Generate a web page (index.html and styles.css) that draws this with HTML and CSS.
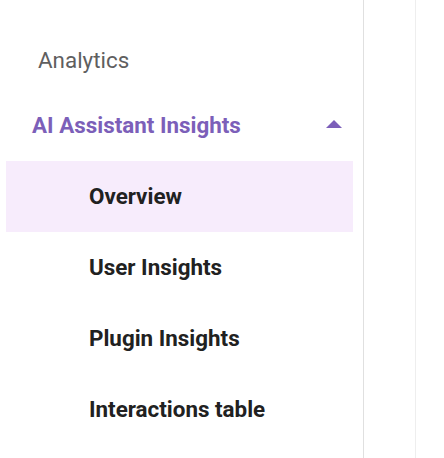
FILE: index.html
```html
<!DOCTYPE html>
<html lang="en">
<head>
<meta charset="utf-8">
<title>Sidebar</title>
<link rel="stylesheet" href="styles.css">
</head>
<body>
<div class="layout">
  <nav class="sidebar">
    <div class="nav-item top">Analytics</div>
    <div class="nav-group">
      <div class="group-head">
        <span class="group-title">AI Assistant Insights</span>
        <span class="caret"></span>
      </div>
      <div class="sub-item active">Overview</div>
      <div class="sub-item">User Insights</div>
      <div class="sub-item">Plugin Insights</div>
      <div class="sub-item">Interactions table</div>
    </div>
  </nav>
  <div class="gutter"></div>
  <main class="content"></main>
</div>
</body>
</html>
```
FILE: styles.css
```css
html, body {
  margin: 0;
  padding: 0;
  background: #ffffff;
  font-family: Roboto, "Liberation Sans", Arial, sans-serif;
}
.layout {
  display: flex;
  height: 458px;
}
.sidebar {
  width: 364px;
  border-right: 1px solid #e0e0e0;
  padding: 26px 10px 0 6px;
  box-sizing: border-box;
  flex: none;
}
.gutter {
  width: 51px;
  flex: none;
}
.content {
  flex: 1;
  border-left: 1px solid #eeeeee;
}
.nav-item.top {
  box-sizing: border-box;
  height: 70px;
  padding-bottom: 2px;
  display: flex;
  align-items: center;
  padding-left: 32px;
  font-size: 22.4px;
  color: #5f5f5f;
}
.group-head {
  box-sizing: border-box;
  height: 60px;
  padding-bottom: 2px;
  display: flex;
  align-items: center;
  justify-content: space-between;
  padding-left: 26px;
  padding-right: 11px;
  margin-bottom: 5px;
}
.group-title {
  font-size: 22.4px;
  font-weight: 700;
  color: #7c5fb9;
}
.caret {
  width: 0;
  height: 0;
  border-left: 8px solid transparent;
  border-right: 8px solid transparent;
  border-bottom: 8px solid #7c5fb9;
  margin-top: -2px;
}
.sub-item {
  box-sizing: border-box;
  height: 71px;
  padding-bottom: 2px;
  display: flex;
  align-items: center;
  padding-left: 83px;
  font-size: 22.4px;
  font-weight: 700;
  color: #212121;
}
.sub-item.active {
  background: #f7ecfc;
}
```
